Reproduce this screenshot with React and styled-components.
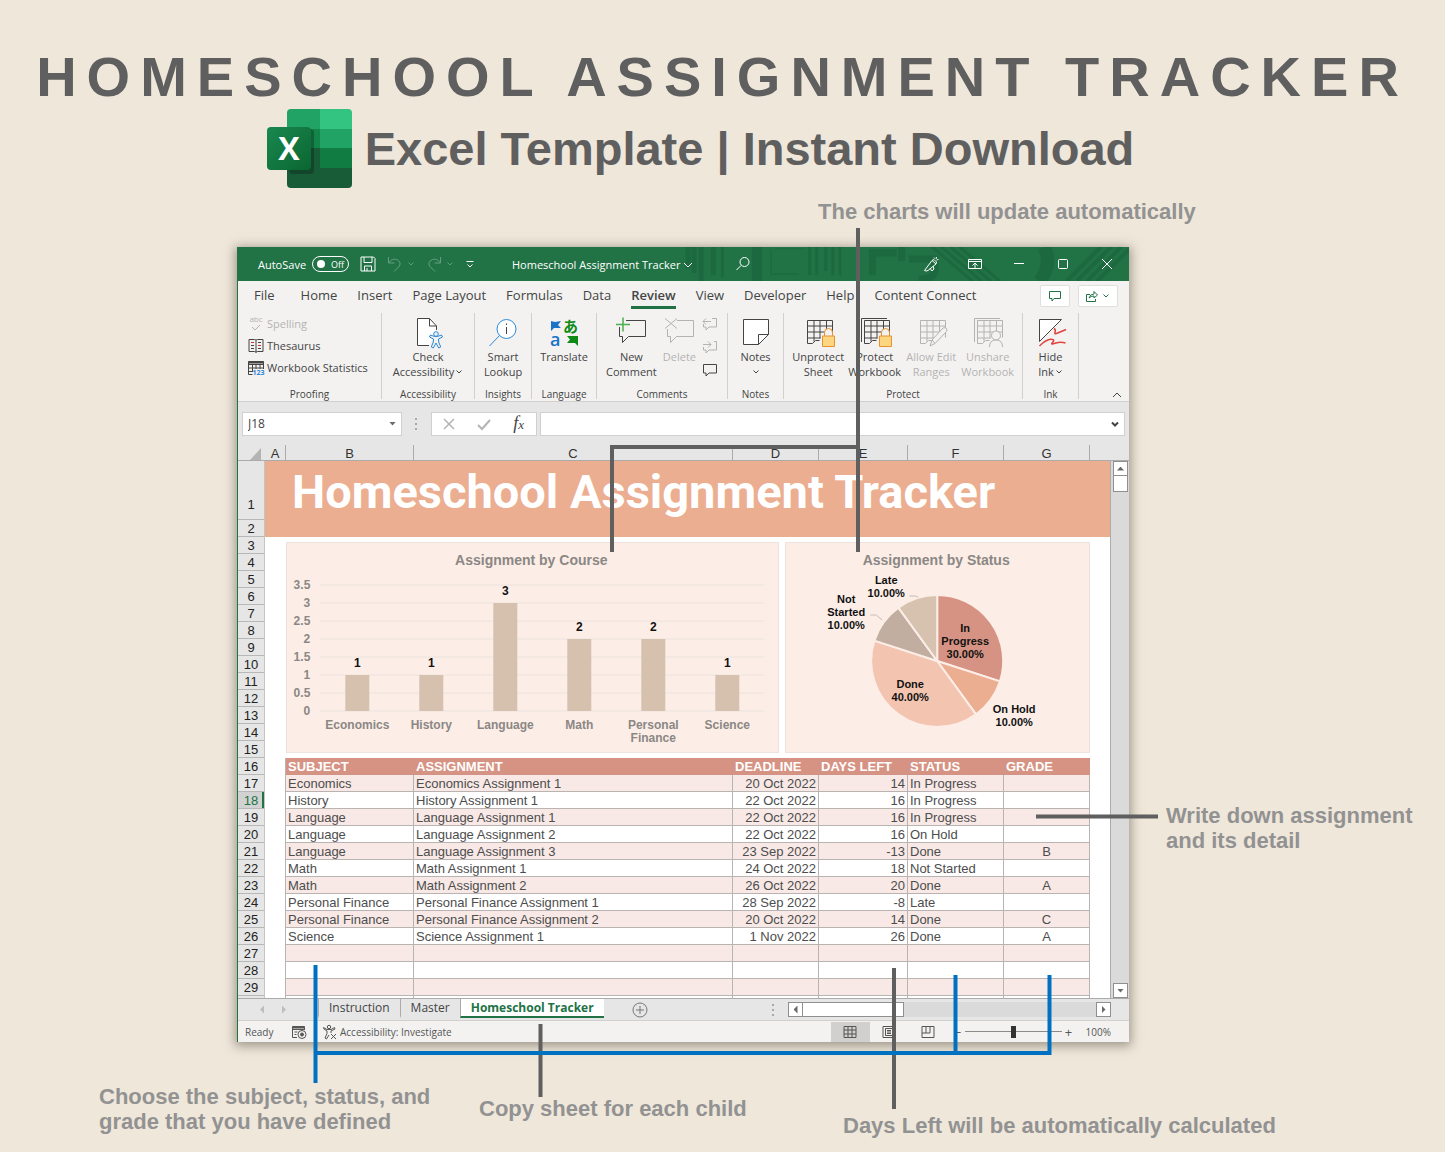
import React, {useState} from 'react'
import styled, {createGlobalStyle} from "styled-components"

const TABS = ["File", "Home", "Insert", "Page Layout", "Formulas", "Data", "Review", "View", "Developer", "Help", "Content Connect"]

const COLUMNS = ["A", "B", "C", "D", "E", "F", "G"]

const HEADERS = ["SUBJECT", "ASSIGNMENT", "DEADLINE", "DAYS LEFT", "STATUS", "GRADE"]

const ROWS = [
  ["Economics", "Economics Assignment 1", "20 Oct 2022", "14", "In Progress", ""],
  ["History", "History Assignment 1", "22 Oct 2022", "16", "In Progress", ""],
  ["Language", "Language Assignment 1", "22 Oct 2022", "16", "In Progress", ""],
  ["Language", "Language Assignment 2", "22 Oct 2022", "16", "On Hold", ""],
  ["Language", "Language Assignment 3", "23 Sep 2022", "-13", "Done", "B"],
  ["Math", "Math Assignment 1", "24 Oct 2022", "18", "Not Started", ""],
  ["Math", "Math Assignment 2", "26 Oct 2022", "20", "Done", "A"],
  ["Personal Finance", "Personal Finance Assignment 1", "28 Sep 2022", "-8", "Late", ""],
  ["Personal Finance", "Personal Finance Assignment 2", "20 Oct 2022", "14", "Done", "C"],
  ["Science", "Science Assignment 1", "1 Nov 2022", "26", "Done", "A"],
  ["", "", "", "", "", ""],
  ["", "", "", "", "", ""],
  ["", "", "", "", "", ""],
  ["", "", "", "", "", ""],
]

const COURSES = [
  {name: ["Economics"], count: 1},
  {name: ["History"], count: 1},
  {name: ["Language"], count: 3},
  {name: ["Math"], count: 2},
  {name: ["Personal", "Finance"], count: 2},
  {name: ["Science"], count: 1},
]

const STATUSES = [
  {lines: ["In", "Progress", "30.00%"], share: 0.3, color: "#d69383", x: 180, y: 90},
  {lines: ["On Hold", "10.00%"], share: 0.1, color: "#ecae91", x: 229, y: 171},
  {lines: ["Done", "40.00%"], share: 0.4, color: "#f3c5b1", x: 125, y: 146},
  {lines: ["Not", "Started", "10.00%"], share: 0.1, color: "#c1aea1", x: 61, y: 61},
  {lines: ["Late", "10.00%"], share: 0.1, color: "#d6c2ae", x: 101, y: 42},
]

/* ---------- icons ---------- */

const ExcelLogo = () => (
  <Logo viewBox="0 0 86 80" aria-label="Excel">
    <defs>
      <clipPath id="sheetShape"><rect x="20" y="0" width="65" height="79" rx="4"/></clipPath>
      <linearGradient id="tile" x1="0" y1="0" x2="1" y2="1">
        <stop offset="0" stopColor="#18884f"/>
        <stop offset="1" stopColor="#0b6631"/>
      </linearGradient>
    </defs>
    <g clipPath="url(#sheetShape)">
      <rect x="20" width="34" height="40" fill="#21a366"/>
      <rect x="53" width="33" height="20" fill="#33c481"/>
      <rect x="53" y="20" width="33" height="20" fill="#21a366"/>
      <rect x="20" y="20" width="33" height="20" fill="#14854a"/>
      <rect x="20" y="39" width="33" height="21" fill="#185c37"/>
      <rect x="53" y="39" width="33" height="21" fill="#107c41"/>
      <rect x="20" y="59" width="66" height="21" fill="#185c37"/>
      <rect x="22" y="20" width="25" height="45" rx="4" fill="#000" opacity=".25"/>
    </g>
    <rect y="18" width="44" height="43" rx="4" fill="url(#tile)"/>
    <text x="22" y="51" textAnchor="middle" fontSize="32" fontWeight="700" fontFamily="'Open Sans', sans-serif" fill="#fff">X</text>
  </Logo>
)

const Caret = () => <Icon $w={8} $h={6} viewBox="0 0 8 6"><path d="M1.500 1.500 4 4l2.500-2.500"/></Icon>

const SpellIcon = () => (
  <Icon $w={16} $h={16} viewBox="0 0 16 16">
    <text x="8" y="6" textAnchor="middle" fontSize="8" fontFamily="'Open Sans', sans-serif" fill="currentColor" stroke="none">abc</text>
    <path d="m4 11 3 3 5-5"/>
  </Icon>
)

const BookIcon = () => (
  <Icon $w={16} $h={16} viewBox="0 0 16 16">
    <path d="M1 1.500h5.500q1.500 0 1.500 1 0-1 1.500-1H15v12H9.500q-1.500 0-1.500 1 0-1-1.500-1H1zM8 2.500v12"/>
    <path d="M3 4.500h3M10 7.500h3" stroke="#d13438"/>
    <path d="M3 7.500h3M3 10.500h3M10 4.500h3M10 10.500h3"/>
  </Icon>
)

const StatsIcon = () => (
  <Icon $w={16} $h={16} viewBox="0 0 16 16">
    <path d="M4.500 14.500H.5v-13h15V9M.5 4.500h15M.5 8h15M.5 11.500H5M4.500 4.500v7M8 4.500V9M12 4.500V9"/>
    <path d="M.5 2.500h15" strokeWidth="2"/>
    <text x="10.500" y="15" textAnchor="middle" fontSize="7" fontWeight="700" fontFamily="'Open Sans', sans-serif" fill="#2b88d8" stroke="none">123</text>
  </Icon>
)

const AccessIcon = () => (
  <Icon $w={32} $h={32} viewBox="0 0 32 32">
    <path d="M17 28.500H5.500v-27h12l7 7.500v4" fill="#fff"/>
    <path d="M17.500 1.500V9h7"/>
    <g stroke="#2b88d8" fill="#f3f2f1">
      <path d="m18.500 18 4 1.500h3l4-1.500 1 2-4 2 .2 3 2 5-2 1-2.700-5-2.700 5-2-1 2-5 .2-3-4-2z"/>
      <circle cx="24" cy="17" r="2.300"/>
    </g>
  </Icon>
)

const LookupIcon = () => (
  <Icon $w={32} $h={32} viewBox="0 0 32 32">
    <circle cx="19.500" cy="12" r="9.500" stroke="#2b88d8" fill="#fff"/>
    <path d="M12.500 18.500 2.500 29" stroke="#2b88d8"/>
    <path d="M19.500 10v7M19.500 6.500v1.500"/>
  </Icon>
)

const TranslateIcon = () => (
  <Icon $w={32} $h={32} viewBox="0 0 32 32">
    <text x="2" y="29" fontSize="18" fontWeight="600" fontFamily="'Open Sans', sans-serif" fill="#1a73c7" stroke="none">a</text>
    <text x="15" y="15" fontSize="15" fontWeight="700" fontFamily="'Noto Sans CJK JP', sans-serif" fill="#0f8a16" stroke="none">あ</text>
    <path d="M3 4v10l3-3h7l-3-3 3-4-6 1z" fill="#1a73c7" stroke="none"/>
    <path d="M19 19h11v10l-3-3h-8l3-3.500z" fill="#0f8a16" stroke="none"/>
  </Icon>
)

const NewCommentIcon = () => (
  <Icon $w={32} $h={32} viewBox="0 0 32 32">
    <path d="M4.500 10v9.500h3v6l6-6h17V3.500H11"/>
    <path d="M8 .5v14M1 7.500h14" stroke="#4caf50" strokeWidth="1.500"/>
  </Icon>
)

const DeleteIcon = () => (
  <Icon $w={32} $h={32} viewBox="0 0 32 32">
    <path d="M4.500 12v7.500h3v6l6-6h17V3.500H14"/>
    <path d="m2 1.500 12 10M14 1.500l-12 10"/>
  </Icon>
)

const SmallComment = ({arrow}) => (
  <Icon $w={16} $h={14} viewBox="0 0 16 14">
    {arrow === "left" && <path d="M1.500 7v3H4v3l3-3h7.500V1.500H10M1 4.500h8M4 1.500l-3 3 3 3"/>}
    {arrow === "right" && <path d="M1.500 7v3H4v3l3-3h7.500V1.500H12M1 4.500h8M6 1.500l3 3-3 3"/>}
    {!arrow && <path d="M1.500 1.500h13V10H7l-3 3v-3H1.500z"/>}
  </Icon>
)

const NotesIcon = () => (
  <Icon $w={32} $h={32} viewBox="0 0 32 32">
    <path d="M3.500 2.500h25v15l-10 10h-15z" fill="#fff"/>
    <path d="M18.500 27.500v-10h10"/>
  </Icon>
)

const SheetIcon = ({stacked, badge}) => (
  <Icon $w={32} $h={32} viewBox="0 0 32 32">
    {stacked && <path d="M2.500 25V1.500H28"/>}
    <path d="M5.500 3.500h25v17M5.500 3.500v23h5l3-3h4M5.500 9h25M5.500 15h25M5.500 21h13M12 3.500v21M18 3.500v18M24.500 3.500v15"/>
    {badge === "lock" && (
      <g stroke="#e8912d">
        <path d="M22.500 19v-3.500a4 4 0 0 1 8 0V19" fill="#f3f2f1"/>
        <path d="M20.500 19h12v10.500h-12z" fill="#fcd581"/>
      </g>
    )}
    {badge === "pencil" && <path d="m15 29 2-6L28 11q2-1 3.500.500 1 1.500 0 3L20 26.500zM17 23l3 3.500" fill="#f3f2f1"/>}
    {badge === "user" && (
      <g fill="#f3f2f1">
        <circle cx="24" cy="18.500" r="4.500"/>
        <path d="M17.500 30q0-7 6.500-7t6.500 7"/>
      </g>
    )}
  </Icon>
)

const InkIcon = () => (
  <Icon $w={32} $h={32} viewBox="0 0 32 32">
    <path d="M4.500 24.500V2.500h22z" fill="#fff"/>
    <path d="M4.500 29q8-8 13-6.500c4 .5-3 5 0 4.500 5-1 6-3 13-1M19 11.500q2 1 1 4c-1 3 3 0 11-3" stroke="#e0433e" strokeWidth="1.500"/>
  </Icon>
)

const TitlePattern = () => (
  <Pattern viewBox="0 0 440 34" preserveAspectRatio="xMaxYMid slice" aria-hidden="true">
    <g fill="none" stroke="#1b613a">
      <path d="M4 0v22M10 0v26M17 0v34M29 0v28" strokeWidth="5"/>
      <path d="M38 0v30M124 0v28M131 0v28M140 0v24M147 0v28M154 0v28" strokeWidth="3"/>
      <path d="M72 0v34" strokeWidth="10"/>
      <path d="M85 27h28M90 2h28M86 2v26" strokeWidth="1"/>
      <path d="M186 28V6h24M222 12h26v12q-2 8-16 8M215 0v14" strokeWidth="7"/>
      <path d="m245 0 40 34M254 0l40 34M263 0l40 34M272 0l40 34" strokeWidth="3"/>
      <path d="M355 0q10 16-4 34" strokeWidth="13"/>
      <path d="m378 34 34-34M388 34l34-34M398 34l34-34M408 34l32-32" strokeWidth="4"/>
    </g>
  </Pattern>
)

/* ---------- charts ---------- */

const BarChart = () => {
  const ticks = [3.5, 3, 2.5, 2, 1.5, 1, 0.5, 0]
  const yOf = v => 169 - v * 36

  return (
    <Chart viewBox="0 0 492 211" role="img" aria-label="Assignment by Course">
      <ChartTitle x="245" y="23">Assignment by Course</ChartTitle>
      {ticks.map(t => (
        <g key={t}>
          <line x1="34" x2="478" y1={yOf(t)} y2={yOf(t)} stroke="#ece3de"/>
          <AxisText x="24" y={yOf(t) + 4} textAnchor="end">{t}</AxisText>
        </g>
      ))}
      {COURSES.map((c, i) => {
        const x = 71 + i * 74
        return (
          <g key={i}>
            <rect x={x - 12} y={yOf(c.count)} width="24" height={c.count * 36} fill="#d5c1ae"/>
            <ValueText x={x} y={yOf(c.count) - 8}>{c.count}</ValueText>
            {c.name.map((n, j) => <AxisText key={n} x={x} y={187 + j * 13} textAnchor="middle">{n}</AxisText>)}
          </g>
        )
      })}
    </Chart>
  )
}

const PieChart = () => {
  const cx = 152, cy = 119, r = 66
  const point = f => [cx + r * Math.sin(f * 2 * Math.PI), cy - r * Math.cos(f * 2 * Math.PI)]
  let start = 0

  return (
    <Chart viewBox="0 0 305 211" role="img" aria-label="Assignment by Status">
      <ChartTitle x="151" y="23">Assignment by Status</ChartTitle>
      {STATUSES.map(s => {
        const [x1, y1] = point(start)
        start += s.share
        const [x2, y2] = point(start)
        return <path key={s.color} d={`M${cx} ${cy}L${x1} ${y1}A${r} ${r} 0 0 1 ${x2} ${y2}Z`} fill={s.color} stroke="#fceee7" strokeWidth="2"/>
      })}
      <path d="M85 73h6l6 5M124 54h6l3 1" fill="none" stroke="#c9bdb6"/>
      {STATUSES.map(s => s.lines.map((l, j) => <SliceText key={s.color + l} x={s.x} y={s.y + j * 13}>{l}</SliceText>))}
    </Chart>
  )
}

/* ---------- ribbon ---------- */

const Tool = ({icon, lines, menu, disabled}) => (
  <ToolButton disabled={disabled}>
    {icon}
    {lines.map((l, i) => (
      <span key={l}>{l}{menu && i === lines.length - 1 && <Caret/>}</span>
    ))}
  </ToolButton>
)

const Ribbon = () => (
  <RibbonBar>
    <Group>
      <Stack>
        <LineButton disabled><SpellIcon/>Spelling</LineButton>
        <LineButton><BookIcon/>Thesaurus</LineButton>
        <LineButton><StatsIcon/>Workbook Statistics</LineButton>
      </Stack>
      <GroupName>Proofing</GroupName>
    </Group>
    <Group>
      <Tools><Tool icon={<AccessIcon/>} lines={["Check", "Accessibility"]} menu/></Tools>
      <GroupName>Accessibility</GroupName>
    </Group>
    <Group>
      <Tools><Tool icon={<LookupIcon/>} lines={["Smart", "Lookup"]}/></Tools>
      <GroupName>Insights</GroupName>
    </Group>
    <Group>
      <Tools><Tool icon={<TranslateIcon/>} lines={["Translate"]}/></Tools>
      <GroupName>Language</GroupName>
    </Group>
    <Group>
      <Tools>
        <Tool icon={<NewCommentIcon/>} lines={["New", "Comment"]}/>
        <Tool icon={<DeleteIcon/>} lines={["Delete"]} disabled/>
        <SmallTools>
          <IconButton aria-label="Previous comment" disabled><SmallComment arrow="left"/></IconButton>
          <IconButton aria-label="Next comment" disabled><SmallComment arrow="right"/></IconButton>
          <IconButton aria-label="Show comments"><SmallComment/></IconButton>
        </SmallTools>
      </Tools>
      <GroupName>Comments</GroupName>
    </Group>
    <Group>
      <Tools>
        <ToolButton><NotesIcon/><span>Notes</span><span><Caret/></span></ToolButton>
      </Tools>
      <GroupName>Notes</GroupName>
    </Group>
    <Group>
      <EvenTools>
        <Tool icon={<SheetIcon badge="lock"/>} lines={["Unprotect", "Sheet"]}/>
        <Tool icon={<SheetIcon stacked badge="lock"/>} lines={["Protect", "Workbook"]}/>
        <Tool icon={<SheetIcon badge="pencil"/>} lines={["Allow Edit", "Ranges"]} disabled/>
        <Tool icon={<SheetIcon stacked badge="user"/>} lines={["Unshare", "Workbook"]} disabled/>
      </EvenTools>
      <GroupName>Protect</GroupName>
    </Group>
    <Group>
      <Tools><Tool icon={<InkIcon/>} lines={["Hide", "Ink"]} menu/></Tools>
      <GroupName>Ink</GroupName>
    </Group>
    <Collapse aria-label="Collapse ribbon">
      <Icon $w={10} $h={8} viewBox="0 0 10 8"><path d="m1 6 4-4 4 4"/></Icon>
    </Collapse>
  </RibbonBar>
)

const TitleBar = () => (
  <Title>
    <TitlePattern/>
    <QuickAccess>
      <AutoSave>
        AutoSave
        <Pill><input type="checkbox"/>Off</Pill>
      </AutoSave>
      <IconButton aria-label="Save">
        <Icon $w={16} $h={16} viewBox="0 0 16 16"><path d="M1 1h12.500L15 2.500V15H1zM4 1v5.500h8V1M4.500 15v-5h7v5M7 12v3"/></Icon>
      </IconButton>
      <IconButton aria-label="Undo" $faint>
        <Icon $w={16} $h={16} viewBox="0 0 16 16"><path d="M1.500 1v6h6M1.500 7Q5 2 9.500 3.500q5 2 3 6.500L7 15.500"/></Icon><Caret/>
      </IconButton>
      <IconButton aria-label="Redo" $faint>
        <Icon $w={16} $h={16} viewBox="0 0 16 16"><path d="M14.500 1v6h-6M14.500 7Q11 2 6.500 3.500q-5 2-3 6.500L9 15.500"/></Icon><Caret/>
      </IconButton>
      <IconButton aria-label="Customize">
        <Icon $w={10} $h={10} viewBox="0 0 10 10"><path d="M1.500 2.500h7M2.500 5.500 5 8l2.500-2.500"/></Icon>
      </IconButton>
    </QuickAccess>
    <FileName>Homeschool Assignment Tracker <Icon $w={10} $h={8} viewBox="0 0 10 8"><path d="m1 2 4 4 4-4"/></Icon></FileName>
    <SearchButton aria-label="Search">
      <Icon $w={16} $h={16} viewBox="0 0 16 16"><circle cx="9.500" cy="6" r="4.500"/><path d="M6 9.500 1.500 14"/></Icon>
    </SearchButton>
    <WindowButtons>
      <IconButton aria-label="Coming soon">
        <Icon $w={16} $h={16} viewBox="0 0 16 16"><path d="M1.500 14.500 9 4.500l4 3.500-8 6.500q-2 1-3.500 0zM7 12l2 3 2-2-1-3M9 4.500l2-1 2.500 2.500L13 8M11 1.500l.5 1M13.500 1l-.5 2M15.500 3.500l-2 .5"/></Icon>
      </IconButton>
      <IconButton aria-label="Ribbon display options">
        <Icon $w={16} $h={14} viewBox="0 0 16 14"><path d="M1.500 2.500h13v9h-13zM1.500 4.500h13M8 11V6.500M5.500 8.500 8 6l2.500 2.500"/></Icon>
      </IconButton>
      <IconButton aria-label="Minimize"><Icon $w={12} $h={12} viewBox="0 0 12 12"><path d="M1 5.500h10"/></Icon></IconButton>
      <IconButton aria-label="Maximize"><Icon $w={12} $h={12} viewBox="0 0 12 12"><rect x="1.500" y="1.500" width="9" height="9" rx="1"/></Icon></IconButton>
      <IconButton aria-label="Close"><Icon $w={12} $h={12} viewBox="0 0 12 12"><path d="m1 1 10 10M11 1 1 11"/></Icon></IconButton>
    </WindowButtons>
  </Title>
)

const FormulaBar = () => (
  <FormulaRow>
    <NameBox>
      <input aria-label="Name box" defaultValue="J18"/>
      <Triangle/>
    </NameBox>
    <Dots/>
    <FxBox>
      <IconButton aria-label="Cancel" disabled><Icon $w={12} $h={12} viewBox="0 0 12 12"><path d="m1 1 10 10M11 1 1 11" strokeWidth="1.500"/></Icon></IconButton>
      <IconButton aria-label="Enter" disabled><Icon $w={14} $h={12} viewBox="0 0 14 12"><path d="m1 7 4 4 8-9" strokeWidth="2"/></Icon></IconButton>
      <FxButton aria-label="Insert function">f<small>x</small></FxButton>
    </FxBox>
    <FormulaInput>
      <input aria-label="Formula bar"/>
      <Icon $w={8} $h={6} viewBox="0 0 8 6"><path d="m1 1.500 3 3 3-3" strokeWidth="2"/></Icon>
    </FormulaInput>
  </FormulaRow>
)

const Sheet = () => {
  const numbers = Array.from({length: 29}, (_, i) => i + 1)

  return (
    <>
      <ColumnHeads>
        <Corner/>
        {COLUMNS.map(c => <span key={c}>{c}</span>)}
      </ColumnHeads>
      <SheetBody>
        <RowHeads>
          {numbers.map(n => <RowHead key={n} $tall={n === 1} $active={n === 18}>{n}</RowHead>)}
        </RowHeads>
        <Canvas>
          <Banner>Homeschool Assignment Tracker</Banner>
          <Charts>
            <BarChart/>
            <PieChart/>
          </Charts>
          <Table>
            <colgroup>
              <Col $w={129}/><col/><Col $w={86}/><Col $w={89}/><Col $w={96}/><Col $w={86}/>
            </colgroup>
            <thead>
              <tr>{HEADERS.map(h => <th key={h}>{h}</th>)}</tr>
            </thead>
            <tbody>
              {ROWS.map((row, i) => (
                <tr key={i}>{row.map((cell, j) => <td key={j}>{cell}</td>)}</tr>
              ))}
            </tbody>
          </Table>
        </Canvas>
        <VScroll>
          <ScrollButton aria-label="Scroll up"><Triangle $up/></ScrollButton>
          <VThumb/>
          <ScrollButton aria-label="Scroll down"><Triangle/></ScrollButton>
        </VScroll>
      </SheetBody>
    </>
  )
}

const BottomBars = () => {
  const [zoom, setZoom] = useState(100)

  return (
    <>
      <SheetTabs>
        <TabNav>
          <Triangle $side="left" $pale/>
          <Triangle $side="right" $pale/>
        </TabNav>
        <SheetTab>Instruction</SheetTab>
        <SheetTab>Master</SheetTab>
        <SheetTab $active>Homeschool Tracker</SheetTab>
        <AddSheet aria-label="New sheet">
          <Icon $w={16} $h={16} viewBox="0 0 16 16"><circle cx="8" cy="8" r="7"/><path d="M8 4v8M4 8h8"/></Icon>
        </AddSheet>
        <Dots/>
        <HScroll>
          <ScrollButton aria-label="Scroll left"><Triangle $side="left"/></ScrollButton>
          <HThumb/>
          <ScrollButton aria-label="Scroll right"><Triangle $side="right"/></ScrollButton>
        </HScroll>
      </SheetTabs>
      <StatusBar>
        <Ready>Ready</Ready>
        <Icon $w={16} $h={14} viewBox="0 0 16 14"><path d="M6 12.500H1.500v-11h12V5M1.500 4.500h12M3.500 7h3M3.500 9.500h2"/><path d="M1.500 2.500h12" strokeWidth="2"/><circle cx="11" cy="9.500" r="4"/><circle cx="11" cy="9.500" r="1.500" fill="currentColor"/></Icon>
        <Access>
          <Icon $w={16} $h={16} viewBox="0 0 16 16"><circle cx="7" cy="3" r="1.700"/><path d="M1.500 3.500 5 5.500h4l3.500-2 .5 1.500-4 2v2M5 7v2.500l-2 4.500 1.500 1L7 11M1.500 3.500l.5 1.500 3 2M9 10l5 5M14 10l-5 5"/></Icon>
          Accessibility: Investigate
        </Access>
        <ViewButton aria-label="Normal" $active><Icon $w={14} $h={14} viewBox="0 0 14 14"><path d="M1 1.500h12v11H1zM1 5h12M1 9h12M5 1.500v11M9 1.500v11"/></Icon></ViewButton>
        <ViewButton aria-label="Page layout"><Icon $w={14} $h={14} viewBox="0 0 14 14"><path d="M1 1.500h12v11H1zM3.500 3.500h7v7h-7zM5 5.500h4M5 7h4M5 8.500h4"/></Icon></ViewButton>
        <ViewButton aria-label="Page break preview"><Icon $w={14} $h={14} viewBox="0 0 14 14"><path d="M1 1.500h12v11H1zM5 1.500V8M9 1.500V8M1 8h8"/></Icon></ViewButton>
        <Zoom>
          <span>−</span>
          <input type="range" min="0" max="200" aria-label="Zoom" value={zoom} onChange={e => setZoom(+e.target.value)}/>
          <span>+</span>
          <small>{zoom}%</small>
        </Zoom>
      </StatusBar>
    </>
  )
}

const App = () => {
  const [tab, setTab] = useState("Review")

  return (
    <Page>
      <GlobalStyle/>
      <Heading>HOMESCHOOL ASSIGNMENT TRACKER</Heading>
      <SubHeading><ExcelLogo/>Excel Template | Instant Download</SubHeading>
      <TopNote><Note>The charts will update automatically</Note></TopNote>
      <Stage>
        <Window>
          <TitleBar/>
          <TabRow>
            {TABS.map(t => (
              <Tab key={t} $active={t === tab} onClick={() => setTab(t)}>{t}</Tab>
            ))}
            <TabActions>
              <BoxButton aria-label="Comments">
                <Icon $w={14} $h={12} viewBox="0 0 14 12"><path d="M1.500 1.500h11v7H6l-2 2.500V8.500H1.500z"/></Icon>
              </BoxButton>
              <BoxButton aria-label="Share">
                <Icon $w={12} $h={12} viewBox="0 0 12 12"><path d="M4 4.500H.5v7h9V9M3 8q1-4 5-4V1.500l3.500 3.500L8 8V6Q5 6 3 8z"/></Icon><Caret/>
              </BoxButton>
            </TabActions>
          </TabRow>
          <Ribbon/>
          <FormulaBar/>
          <Sheet/>
          <BottomBars/>
          <Lines viewBox="0 0 892 795" preserveAspectRatio="none" aria-hidden="true">
            <g stroke="#5f5f5f">
              <path d="M621-19V305M621 200H375V305M799 569.500H921M657 721V862M303.500 777V850"/>
            </g>
            <g stroke="#0070c0">
              <path d="M78.500 718V836M78.500 806H812.500V728M718.500 728V806"/>
            </g>
          </Lines>
        </Window>
        <SideNote>Write down assignment and its detail</SideNote>
      </Stage>
      <BottomNotes>
        <Note>Choose the subject, status, and grade that you have defined</Note>
        <Note>Copy sheet for each child</Note>
        <Note>Days Left will be automatically calculated</Note>
      </BottomNotes>
    </Page>
  )
}

export default App

const GlobalStyle = createGlobalStyle`
*{
    box-sizing: border-box;
}
body{
    margin: 0;
    background-color: #efe7da;
    font-family: "Liberation Sans", Arial, sans-serif;
}
button, input{
    margin: 0;
    padding: 0;
    border: none;
    background: none;
    color: inherit;
    font: inherit;
}
`

const Page = styled.main`
padding-top: 45px;
overflow: hidden;
`

const Heading = styled.h1`
margin: 0;
font-size: 56px;
line-height: 64px;
letter-spacing: 10px;
text-align: center;
white-space: nowrap;
color: #5f5f5f;
`

const SubHeading = styled.h2`
margin: 0;
padding-right: 44px;
display: flex;
justify-content: center;
align-items: center;
gap: 12px;
font-size: 47px;
line-height: 80px;
white-space: nowrap;
color: #5f5f5f;
`

const Logo = styled.svg`
width: 86px;
height: 80px;
`

const Note = styled.p`
margin: 0;
font-size: 22px;
line-height: 25px;
font-weight: bold;
color: #929292;
`

const TopNote = styled.div`
display: grid;
grid-template-columns: 818fr 627fr;
padding: 10px 0 23px;

p{
    grid-column: 2;
}
`

const Stage = styled.section`
display: grid;
grid-template-columns: 237fr 892fr 316fr;
`

const SideNote = styled(Note)`
align-self: end;
padding: 0 28px 189px 37px;
`

const BottomNotes = styled.footer`
display: grid;
grid-template-columns: 336fr 320fr 602fr;
column-gap: 44px;
padding: 42px 0 14px 99px;

p:nth-child(2){
    align-self: center;
    padding-bottom: 5px;
}
p:nth-child(3){
    align-self: end;
    padding-top: 29px;
}
`

const Window = styled.div`
grid-column: 2;
position: relative;
min-width: 0;
border-left: 1px solid #217346;
background-color: #e6e6e6;
box-shadow: 0 2px 10px 2px rgba(80, 75, 60, .5);
font-family: "Open Sans", "Noto Sans", sans-serif;
font-size: 11px;
color: #444;
`

/* callout lines run over the window and out of its edges */
const Lines = styled.svg`
position: absolute;
top: 0;
left: -1px;
width: calc(100% + 1px);
height: 100%;
overflow: visible;
pointer-events: none;
fill: none;
stroke-width: 4px;
`

const Icon = styled.svg`
width: ${({$w}) => $w}px;
height: ${({$h}) => $h}px;
flex-shrink: 0;
overflow: visible;
fill: none;
stroke: currentColor;
`

const IconButton = styled.button`
display: flex;
align-items: center;
justify-content: center;
gap: 4px;
opacity: ${({$faint}) => $faint ? .3 : 1};

&:disabled{
    color: #b5b3b1;
}
`

const Title = styled.header`
position: relative;
display: grid;
grid-template-columns: 274fr 223fr 174fr 220fr;
align-items: center;
height: 34px;
background-color: #217346;
color: white;
`

const Pattern = styled.svg`
position: absolute;
top: 0;
right: 0;
width: 50%;
height: 34px;
opacity: .5;
`

const QuickAccess = styled.div`
position: relative;
display: flex;
align-items: center;
gap: 11px;
padding-left: 20px;
`

const AutoSave = styled.label`
display: flex;
align-items: center;
gap: 6px;
`

const Pill = styled.span`
display: flex;
align-items: center;
justify-content: space-between;
width: 37px;
height: 16px;
padding: 0 4px;
border: 1px solid white;
border-radius: 8px;
font-size: 9px;

input{
    appearance: none;
    width: 8px;
    height: 8px;
    border-radius: 50%;
    background-color: white;
}
`

const FileName = styled.div`
position: relative;
white-space: nowrap;
`

const SearchButton = styled(IconButton)`
position: relative;
justify-self: start;
`

const WindowButtons = styled.div`
position: relative;
display: grid;
grid-template-columns: repeat(5, 1fr);
`

const TabRow = styled.nav`
display: flex;
align-items: center;
gap: 20px;
height: 29px;
padding: 0 11px 0 16px;
background-color: #f3f2f1;
`

const Tab = styled.button`
height: 27px;
padding-top: 3px;
font-size: 13px;
line-height: 21px;
white-space: nowrap;
font-weight: ${({$active}) => $active ? 600 : 400};
border-bottom: 3px solid ${({$active}) => $active ? "#217346" : "transparent"};

&:first-child{
    margin-right: 6px;
}
`

const TabActions = styled.div`
display: flex;
gap: 8px;
margin-left: auto;
`

const BoxButton = styled(IconButton)`
height: 22px;
padding: 0 7px;
border: 1px solid #e1dfdd;
border-radius: 2px;
background-color: white;
color: #217346;
`

const RibbonBar = styled.div`
display: grid;
grid-template-columns: 144fr 93fr 57fr 65fr 131fr 56fr 239fr 56fr 50fr;
height: 92px;
padding-top: 3px;
border-bottom: 1px solid #d2d0ce;
background-color: #f3f2f1;
`

const Group = styled.div`
display: flex;
flex-direction: column;
justify-content: space-between;
min-width: 0;
border-right: 1px solid #d2d0ce;
margin-bottom: 2px;
`

const GroupName = styled.div`
font-size: 10px;
line-height: 10px;
text-align: center;
`

const Stack = styled.div`
display: flex;
flex-direction: column;
padding-left: 10px;
`

const LineButton = styled.button`
display: flex;
align-items: center;
gap: 3px;
line-height: 22px;
white-space: nowrap;

&:disabled{
    color: #b5b3b1;
}
`

const Tools = styled.div`
display: flex;
justify-content: center;
gap: 6px;
padding-top: 4px;
`

const EvenTools = styled.div`
display: grid;
grid-template-columns: repeat(4, 1fr);
padding: 4px 6px 0;
`

const ToolButton = styled.button`
display: flex;
flex-direction: column;
align-items: center;
line-height: 15px;
white-space: nowrap;

span{
    display: flex;
    align-items: center;
    gap: 1px;
    min-height: 15px;
}
&:disabled{
    color: #b5b3b1;
}
`

const SmallTools = styled.div`
display: flex;
flex-direction: column;
gap: 9px;
`

const Collapse = styled(IconButton)`
align-self: end;
justify-self: end;
padding: 0 7px 2px 0;
`

const FormulaRow = styled.div`
display: flex;
align-items: center;
height: 43px;
padding: 0 4px;
`

const NameBox = styled.div`
display: flex;
align-items: center;
width: 160px;
height: 24px;
padding: 0 5px;
border: 1px solid #d0d0d0;
background-color: white;
font-size: 12px;

input{
    flex: 1;
    min-width: 0;
}
`

const Dots = styled.span`
width: 2px;
height: 12px;
margin: 0 14px 0 13px;
background: repeating-linear-gradient(#a8a8a8 0 2px, transparent 2px 5px);
`

const FxBox = styled.div`
display: grid;
grid-template-columns: repeat(3, 1fr);
width: 106px;
height: 24px;
margin-right: 3px;
border: 1px solid #d0d0d0;
background-color: white;
`

const FxButton = styled.button`
font-family: "Liberation Serif", serif;
font-style: italic;
font-size: 18px;
line-height: 20px;

small{
    font-size: 13px;
}
`

const FormulaInput = styled(NameBox)`
flex: 1;
width: auto;
`

const ColumnHeads = styled.div`
display: grid;
grid-template-columns: 27px 21px 128px 1fr 86px 89px 96px 86px 39px;
height: 16px;
border-bottom: 1px solid #ababab;
font: 13px/17px "Liberation Sans", Arial, sans-serif;
color: #333;

span{
    border-right: 1px solid #ababab;
    text-align: center;
}
`

const Corner = styled.div`
margin: 3px 4px 2px 12px;
background-color: #b4b4b4;
clip-path: polygon(100% 0, 100% 100%, 0 100%);
`

const SheetBody = styled.div`
display: grid;
grid-template-columns: 27px 1fr 18px;
height: 538px;
overflow: hidden;
border-bottom: 1px solid #ababab;
`

const RowHeads = styled.div`
min-height: 0;
border-right: 1px solid #c4c4c4;
font: 13px/17px "Liberation Sans", Arial, sans-serif;
color: #222;
`

const RowHead = styled.div`
height: ${({$tall}) => $tall ? 59 : 17}px;
padding-top: ${({$tall}) => $tall ? 35 : 0}px;
border-bottom: 1px solid #b8b8b8;
text-align: center;
color: ${({$active}) => $active ? "#217346" : "inherit"};
background-color: ${({$active}) => $active ? "#d2d2d2" : "transparent"};
box-shadow: ${({$active}) => $active ? "inset -2px 0 #217346" : "none"};
`

const Canvas = styled.div`
min-width: 0;
min-height: 0;
border-right: 1px solid #ababab;
background-color: white;
font-family: "Liberation Sans", Arial, sans-serif;
`

const Banner = styled.div`
height: 76px;
padding-left: 27px;
background-color: #ecae91;
color: white;
font: 700 47px/62px Roboto, sans-serif;
white-space: nowrap;
`

const Charts = styled.div`
display: grid;
grid-template-columns: 492fr 305fr;
gap: 6px;
height: 221px;
padding: 5px 20px 5px 21px;
`

const Chart = styled.svg`
width: 100%;
height: 211px;
background-color: #fceee7;
outline: 1px solid #eee2dc;
outline-offset: -1px;
font-family: "Liberation Sans", Arial, sans-serif;
font-weight: bold;
`

const ChartTitle = styled.text`
font-size: 14px;
text-anchor: middle;
fill: #8b8784;
`

const AxisText = styled.text`
font-size: 12px;
fill: #8b8784;
`

const ValueText = styled.text`
font-size: 12px;
text-anchor: middle;
fill: #111;
`

const SliceText = styled.text`
font-size: 11px;
text-anchor: middle;
fill: #111;
`

const Col = styled.col`
width: ${({$w}) => $w}px;
`

const Table = styled.table`
width: calc(100% - 40px);
margin-left: 20px;
table-layout: fixed;
border-collapse: separate;
border-spacing: 0;
font-size: 13px;
line-height: 15px;
color: #4d4d4d;

th, td{
    height: 17px;
    padding: 1px 2px 0;
    border-right: 1px solid #b9b3b1;
    border-bottom: 1px solid #b9b3b1;
    white-space: nowrap;
}
th{
    text-align: left;
    color: white;
    background-color: #d69383;
    border-color: #cf9486;
}
th:first-child, td:first-child{
    border-left: 1px solid #b9b3b1;
}
tbody tr:nth-child(odd){
    background-color: #f8e9e6;
}
td:nth-child(3), td:nth-child(4){
    text-align: right;
}
td:nth-child(6){
    text-align: center;
}
`

const VScroll = styled.div`
display: flex;
flex-direction: column;
min-height: 0;
padding-left: 2px;
background-color: #dadada;

button:last-child{
    margin-top: auto;
}
`

const ScrollButton = styled.button`
display: flex;
align-items: center;
justify-content: center;
flex-shrink: 0;
width: 15px;
height: 15px;
border: 1px solid #8f8f8f;
background-color: white;
`

const VThumb = styled.div`
width: 15px;
height: 16px;
border: 1px solid #8f8f8f;
border-top: none;
background-color: white;
`

const shapes = {
  up: "50% 0, 100% 100%, 0 100%",
  down: "0 0, 100% 0, 50% 100%",
  left: "100% 0, 100% 100%, 0 50%",
  right: "0 0, 100% 50%, 0 100%",
}

const Triangle = styled.i`
width: ${({$side}) => $side ? 4 : 7}px;
height: ${({$side}) => $side ? 8 : 4}px;
background-color: ${({$pale}) => $pale ? "#bdbdbd" : "#6a6a6a"};
clip-path: polygon(${({$side, $up}) => shapes[$side || ($up ? "up" : "down")]});
`

const SheetTabs = styled.div`
display: flex;
align-items: center;
height: 22px;
padding-right: 18px;
border-bottom: 1px solid #d2d0ce;
`

const TabNav = styled.div`
display: flex;
gap: 18px;
width: 80px;
padding-left: 22px;
`

const SheetTab = styled.button`
align-self: flex-start;
height: 19px;
padding: 0 10px;
font-size: 12px;
line-height: 17px;
white-space: nowrap;
border-left: 1px solid #ababab;
border-bottom: 2px solid ${({$active}) => $active ? "#217346" : "transparent"};
background-color: ${({$active}) => $active ? "white" : "transparent"};
color: ${({$active}) => $active ? "#217346" : "inherit"};
font-weight: ${({$active}) => $active ? 700 : 400};
`

const AddSheet = styled(IconButton)`
margin: 0 auto 0 28px;
color: #777;
`

const HScroll = styled.div`
display: flex;
justify-content: space-between;
width: 37%;
height: 15px;
background-color: #dadada;
`

const HThumb = styled.div`
width: 101px;
margin-right: auto;
border: 1px solid #8f8f8f;
border-left: none;
background-color: white;
`

const StatusBar = styled.div`
display: flex;
align-items: center;
height: 21px;
padding-right: 18px;
background-color: #f3f2f1;
font-size: 10px;
color: #555;
`

const Ready = styled.span`
width: 53px;
padding-left: 7px;
`

const Access = styled.span`
display: flex;
align-items: center;
gap: 2px;
margin: 0 auto 0 15px;
`

const ViewButton = styled(IconButton)`
width: 39px;
height: 20px;
background-color: ${({$active}) => $active ? "#d2d0ce" : "transparent"};
`

const Zoom = styled.div`
display: flex;
align-items: center;
gap: 3px;
margin-left: 6px;

span{
    width: 8px;
    font-size: 13px;
    line-height: 16px;
    text-align: center;
}
input{
    appearance: none;
    width: 97px;
    height: 12px;
    background: linear-gradient(#8a8a8a, #8a8a8a) center / 100% 1px no-repeat;
}
input::-webkit-slider-thumb{
    appearance: none;
    width: 5px;
    height: 12px;
    background-color: #333;
}
small{
    margin-left: 10px;
    font-size: 10px;
}
`
